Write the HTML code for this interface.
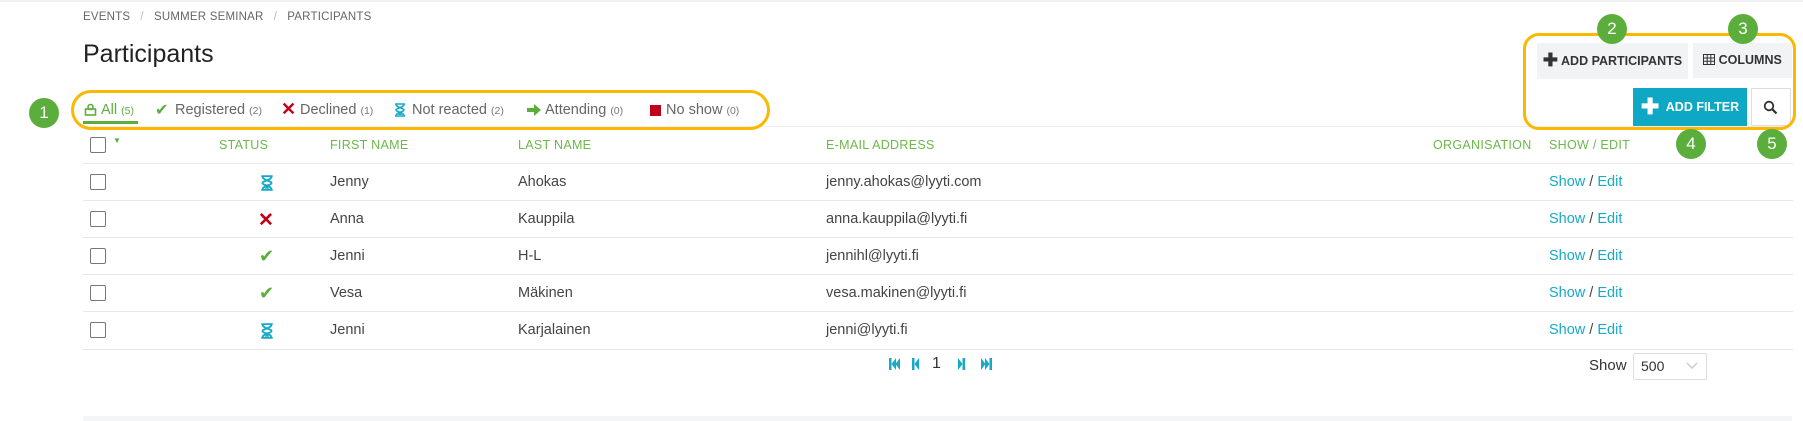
<!DOCTYPE html>
<html><head><meta charset="utf-8"><style>
*{box-sizing:border-box;margin:0;padding:0}
body{width:1803px;height:421px;background:#fff;font-family:"Liberation Sans",sans-serif;position:relative;overflow:hidden;color:#444}
.a{position:absolute;white-space:nowrap}
.bc{top:11px;font-size:11.5px;color:#666;letter-spacing:.2px}
.h1{left:83px;top:40px;font-size:25px;color:#222}
.tab{top:102px;font-size:14.5px;color:#666}
.cnt{font-size:10.5px;color:#777}
.hd{top:138px;font-size:12.5px;color:#6cb84a;letter-spacing:.3px}
.cell{font-size:14.5px;color:#444}
.line{position:absolute;left:83px;width:1710px;height:1px;background:#e8e8e8}
.cb{position:absolute;left:90px;width:16px;height:16px;border:1.5px solid #777;border-radius:2px;background:#fff}
.lk{color:#17a9c5}
.badge{position:absolute;width:30px;height:30px;border-radius:50%;background:#5bae3c;color:#fff;font-size:17px;text-align:center;line-height:30px}
.yb{position:absolute;border:3px solid #fbb800;border-radius:16px}
.btn{position:absolute;background:#f2f3f5;font-size:12.5px;font-weight:bold;color:#333;line-height:35px;text-align:center}
</style></head><body>
<div style="position:absolute;left:0;top:0;width:1803px;height:2px;background:#f1f1f1"></div>
<div class="a bc" style="left:83px">EVENTS &nbsp;&nbsp;<span style="color:#bbb">/</span>&nbsp;&nbsp; SUMMER SEMINAR &nbsp;&nbsp;<span style="color:#bbb">/</span>&nbsp;&nbsp; PARTICIPANTS</div>
<div class="a h1">Participants</div>

<!-- tabs -->
<div class="line" style="top:126px;background:#eee"></div>
<div style="position:absolute;left:83px;top:121px;width:55px;height:3px;background:#5bae3c"></div>
<svg class="a" style="left:84px;top:103px" width="13" height="13" viewBox="0 0 13 13"><rect x="1.5" y="6" width="10" height="6" fill="none" stroke="#5bae3c" stroke-width="1.6"/><circle cx="6.5" cy="4" r="2.5" fill="none" stroke="#5bae3c" stroke-width="1.6"/></svg>
<div class="a tab" style="left:101px;color:#5bae3c">All <span class="cnt" style="color:#5bae3c">(5)</span></div>
<div class="a tab" style="left:155px;top:100px;color:#5bae3c;font-size:16px">✔</div>
<div class="a tab" style="left:175px">Registered <span class="cnt">(2)</span></div>
<div class="a tab" style="left:281px;top:99px;color:#c0001a;font-weight:bold;font-size:18px">✕</div>
<div class="a tab" style="left:300px">Declined <span class="cnt">(1)</span></div>
<svg class="a" style="left:394px;top:103px" width="12" height="14" viewBox="0 0 12 14"><path d="M1 1h10M1 13h10M2 1c0 4 8 4 8 6s-8 2-8 6M10 1c0 4-8 4-8 6s8 2 8 6" fill="none" stroke="#17a9c5" stroke-width="1.6"/><path d="M4 12l2-3 2 3z" fill="#17a9c5"/></svg>
<div class="a tab" style="left:412px">Not reacted <span class="cnt">(2)</span></div>
<svg class="a" style="left:527px;top:104px" width="14" height="12" viewBox="0 0 14 12"><path d="M0 4h7V0l7 6-7 6V8H0z" fill="#5bae3c"/></svg>
<div class="a tab" style="left:545px">Attending <span class="cnt">(0)</span></div>
<div style="position:absolute;left:650px;top:105px;width:11px;height:11px;background:#c0001a"></div>
<div class="a tab" style="left:666px">No show <span class="cnt">(0)</span></div>
<div class="yb" style="left:71px;top:90px;width:699px;height:40px;border-radius:20px"></div>
<div class="badge" style="left:29px;top:98px">1</div>

<!-- right buttons -->
<div class="btn" style="left:1537px;top:43px;width:151px">
<span style="font-size:18px;vertical-align:-1px">✚</span> ADD PARTICIPANTS</div>
<div class="btn" style="left:1693px;top:43px;width:99px"><svg width="12" height="11" viewBox="0 0 12 11" style="vertical-align:-1px"><path d="M.5.5h11v10H.5zM.5 4h11M.5 7.3h11M4.2.5v10M7.8.5v10" fill="none" stroke="#333" stroke-width="1"/></svg> COLUMNS</div>
<div class="btn" style="left:1633px;top:88px;width:114px;height:38px;line-height:38px;background:#0fa8c4;color:#fff"><span style="font-size:22px;vertical-align:-3px">✚</span>&nbsp; ADD FILTER</div>
<div style="position:absolute;left:1751px;top:88px;width:40px;height:38px;border:1px solid #ddd;background:#fff"></div>
<svg class="a" style="left:1763px;top:100px" width="15" height="15" viewBox="0 0 15 15"><circle cx="6" cy="6" r="4.3" fill="none" stroke="#333" stroke-width="1.8"/><path d="M9.2 9.2l4.3 4.3" stroke="#333" stroke-width="2.2"/></svg>
<div class="yb" style="left:1523px;top:33px;width:273px;height:97px"></div>
<div class="badge" style="left:1597px;top:14px">2</div>
<div class="badge" style="left:1728px;top:14px">3</div>
<div class="badge" style="left:1676px;top:129px">4</div>
<div class="badge" style="left:1757px;top:129px">5</div>

<!-- header -->
<div class="cb" style="top:137px"></div>
<div class="a" style="left:113px;top:136px;font-size:8px;color:#5bae3c">▼</div>
<div class="a hd" style="left:219px">STATUS</div>
<div class="a hd" style="left:330px">FIRST NAME</div>
<div class="a hd" style="left:518px">LAST NAME</div>
<div class="a hd" style="left:826px">E-MAIL ADDRESS</div>
<div class="a hd" style="left:1433px">ORGANISATION</div>
<div class="a hd" style="left:1549px">SHOW / EDIT</div>
<div class="line" style="top:163px"></div>

<!-- rows -->
<div class="line" style="top:200px"></div>
<div class="line" style="top:237px"></div>
<div class="line" style="top:274px"></div>
<div class="line" style="top:311px"></div>
<div class="line" style="top:349px"></div>

<div class="cb" style="top:174px"></div>
<svg class="a" style="left:260px;top:175px" width="14" height="16" viewBox="0 0 12 14"><path d="M1 1h10M1 13h10M2 1c0 4 8 4 8 6s-8 2-8 6M10 1c0 4-8 4-8 6s8 2 8 6" fill="none" stroke="#17a9c5" stroke-width="1.6"/><path d="M4 12l2-3 2 3z" fill="#17a9c5"/></svg>
<div class="a cell" style="left:330px;top:174px">Jenny</div>
<div class="a cell" style="left:518px;top:174px">Ahokas</div>
<div class="a cell" style="left:826px;top:174px">jenny.ahokas@lyyti.com</div>
<div class="a cell" style="left:1549px;top:174px"><span class="lk">Show</span> / <span class="lk">Edit</span></div>

<div class="cb" style="top:211px"></div>
<div class="a" style="left:258px;top:209px;color:#c0001a;font-weight:bold;font-size:19px">✕</div>
<div class="a cell" style="left:330px;top:211px">Anna</div>
<div class="a cell" style="left:518px;top:211px">Kauppila</div>
<div class="a cell" style="left:826px;top:211px">anna.kauppila@lyyti.fi</div>
<div class="a cell" style="left:1549px;top:211px"><span class="lk">Show</span> / <span class="lk">Edit</span></div>

<div class="cb" style="top:248px"></div>
<div class="a" style="left:259px;top:246px;color:#5bae3c;font-size:18px">✔</div>
<div class="a cell" style="left:330px;top:248px">Jenni</div>
<div class="a cell" style="left:518px;top:248px">H-L</div>
<div class="a cell" style="left:826px;top:248px">jennihl@lyyti.fi</div>
<div class="a cell" style="left:1549px;top:248px"><span class="lk">Show</span> / <span class="lk">Edit</span></div>

<div class="cb" style="top:285px"></div>
<div class="a" style="left:259px;top:283px;color:#5bae3c;font-size:18px">✔</div>
<div class="a cell" style="left:330px;top:285px">Vesa</div>
<div class="a cell" style="left:518px;top:285px">Mäkinen</div>
<div class="a cell" style="left:826px;top:285px">vesa.makinen@lyyti.fi</div>
<div class="a cell" style="left:1549px;top:285px"><span class="lk">Show</span> / <span class="lk">Edit</span></div>

<div class="cb" style="top:322px"></div>
<svg class="a" style="left:260px;top:323px" width="14" height="16" viewBox="0 0 12 14"><path d="M1 1h10M1 13h10M2 1c0 4 8 4 8 6s-8 2-8 6M10 1c0 4-8 4-8 6s8 2 8 6" fill="none" stroke="#17a9c5" stroke-width="1.6"/><path d="M4 12l2-3 2 3z" fill="#17a9c5"/></svg>
<div class="a cell" style="left:330px;top:322px">Jenni</div>
<div class="a cell" style="left:518px;top:322px">Karjalainen</div>
<div class="a cell" style="left:826px;top:322px">jenni@lyyti.fi</div>
<div class="a cell" style="left:1549px;top:322px"><span class="lk">Show</span> / <span class="lk">Edit</span></div>

<!-- pagination -->
<svg class="a" style="left:889px;top:357px" width="104" height="14" viewBox="0 0 104 14"><g fill="#17a9c5"><rect x="0" y="1" width="2.5" height="12"/><path d="M2.5 7L7 1v12zM6.5 7L11 1v12z"/><rect x="23" y="1" width="2.5" height="12"/><path d="M25.5 7L30 1v12z"/><path d="M69 1l4.5 6-4.5 6z"/><rect x="73.5" y="1" width="2.5" height="12"/><path d="M92 1l4.5 6-4.5 6zM96 1l4.5 6-4.5 6z"/><rect x="100.5" y="1" width="2.5" height="12"/></g></svg>
<div class="a" style="left:932px;top:355px;font-size:16px;color:#333">1</div>
<div class="a" style="left:1589px;top:357px;font-size:15px;color:#333">Show</div>
<div style="position:absolute;left:1633px;top:353px;width:74px;height:27px;border:1px solid #ddd;border-radius:2px;background:#fff"></div>
<div class="a" style="left:1641px;top:358px;font-size:14px;color:#333">500</div>
<svg class="a" style="left:1686px;top:362px" width="12" height="8" viewBox="0 0 12 8"><path d="M1 1l5 5 5-5" fill="none" stroke="#ccc" stroke-width="1.5"/></svg>
<div style="position:absolute;left:83px;top:416px;width:1709px;height:5px;background:#f4f5f7"></div>
</body></html>
